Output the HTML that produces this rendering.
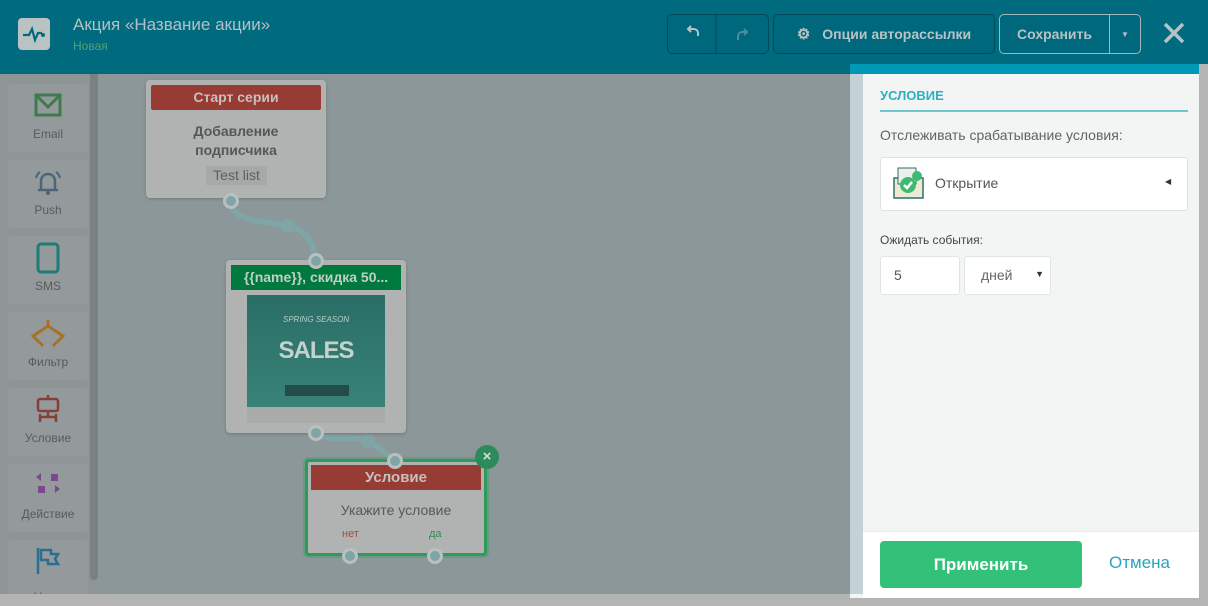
<!DOCTYPE html><html><head><meta charset="utf-8"><style>
*{box-sizing:border-box;margin:0;padding:0}
body{width:1208px;height:606px;overflow:hidden;position:relative;background:#8b9798;font-family:"Liberation Sans",sans-serif}
.abs{position:absolute}
.hdr{left:0;top:0;width:1208px;height:74px;background:#006a7f}
.logo{left:18px;top:18px;width:32px;height:32px;background:#b9c3c4;border-radius:4px}
.side{left:0;top:74px;width:98px;height:520px;background:#8f9495}
.item{left:8px;width:80px;height:68px;background:#949a9b;border-radius:4px;text-align:center;font-size:12px;color:#565b5c}
.item span{position:absolute;left:0;right:0;bottom:11px}
.item svg{position:absolute;left:24px;top:6px}
.sb{left:90px;top:74px;width:8px;height:506px;background:#7c8081;border-radius:0 0 4px 4px}
.card{background:#b1b3b3;border-radius:4px;box-shadow:0 1px 3px rgba(0,0,0,.2)}
.dot{width:16px;height:16px;border-radius:50%;background:#7fa5a6;border:3px solid #b8c0c0}
.btn{border:1px solid #004a59;border-radius:5px;height:40px;color:#b6c3c6;font-weight:bold;font-size:14px;display:flex;align-items:center;justify-content:center}
</style></head><body>
<div class="abs hdr"></div>
<div class="abs logo"><svg width="32" height="32"><path d="M5 17h6l3-6 3 11 3-7h4" stroke="#006a7f" stroke-width="2.2" fill="none"/><circle cx="25" cy="17" r="2" fill="#006a7f"/></svg></div>
<div class="abs" style="left:73px;top:15px;font-size:17px;color:#b4c1c4">Акция «Название акции»</div>
<div class="abs" style="left:73px;top:39px;font-size:12px;color:#51a077">Новая</div>
<div class="abs btn" style="left:667px;top:14px;width:102px;background:#00687c"><svg width="102" height="40"><path d="M30 22v-3a4 4 0 0 0-4-4h-6M23 12l-3 3 3 3" stroke="#b6c3c6" stroke-width="2" fill="none"/><line x1="48" y1="0" x2="48" y2="40" stroke="#004a59"/><path d="M70 26v-4a4 4 0 0 1 4-4h5M76 15l3 3-3 3" stroke="#4d8e9b" stroke-width="2" fill="none"/></svg></div>
<div class="abs btn" style="left:773px;top:14px;width:222px;background:#00687c"><span style="font-size:15px;margin-right:12px">⚙</span>Опции авторассылки</div>
<div class="abs btn" style="left:999px;top:14px;width:142px;border-color:#9fb7bd;background:#00687c;justify-content:flex-start"><span style="width:110px;text-align:center;border-right:1px solid #9fb7bd;line-height:38px">Сохранить</span><span style="flex:1;text-align:center;font-size:8px">▼</span></div>
<svg class="abs" style="left:1162px;top:21px" width="24" height="24"><path d="M3 3l18 18M21 3L3 21" stroke="#b6c3c6" stroke-width="3.5"/></svg>

<div class="abs side"></div>
<div class="abs sb"></div>
<div class="abs item" style="top:84px"><svg width="32" height="32"><rect x="4" y="5" width="24" height="20" fill="none" stroke="#3e7a4c" stroke-width="3"/><path d="M5 6l11 11 11-11" fill="none" stroke="#3e7a4c" stroke-width="3"/></svg><span>Email</span></div>
<div class="abs item" style="top:160px"><svg width="32" height="32"><path d="M9 24V15a7 7 0 0 1 14 0v9h3H6z" fill="none" stroke="#4e6478" stroke-width="2.5"/><circle cx="16" cy="27" r="2" fill="#4e6478"/><path d="M4 12a10 10 0 0 1 4-6M28 12a10 10 0 0 0-4-6" stroke="#4e6478" stroke-width="2" fill="none"/></svg><span>Push</span></div>
<div class="abs item" style="top:236px"><svg width="32" height="32"><rect x="6" y="2" width="20" height="28" rx="3" fill="none" stroke="#1c7c79" stroke-width="3"/></svg><span>SMS</span></div>
<div class="abs item" style="top:312px"><svg width="40" height="32" style="left:20px"><path d="M20 2v8M20 8L5 18l10 10M20 8l15 10-10 10" fill="none" stroke="#a67228" stroke-width="3"/></svg><span>Фильтр</span></div>
<div class="abs item" style="top:388px"><svg width="32" height="32"><rect x="6" y="5" width="20" height="12" rx="2" fill="none" stroke="#853f3b" stroke-width="2.5"/><path d="M16 1v4M16 17v6M8 23h16M8 20v8M24 20v8" stroke="#853f3b" stroke-width="2.5"/></svg><span>Условие</span></div>
<div class="abs item" style="top:464px"><svg width="32" height="32"><rect x="19" y="4" width="7" height="7" fill="#7b4a8e"/><rect x="6" y="16" width="7" height="7" fill="#7b4a8e"/><path d="M4 7l5-4v8zM28 19l-5-4v8z" fill="#7b4a8e"/></svg><span>Действие</span></div>
<div class="abs item" style="top:540px;height:60px"><svg width="32" height="32"><path d="M6 2v26" stroke="#2a6f8f" stroke-width="2.5"/><path d="M9 4h10v4h7l-3 5 3 5H16v-4H9z" fill="none" stroke="#2a6f8f" stroke-width="2.5"/></svg><span style="bottom:-4px">Цель</span></div>

<svg class="abs" style="left:0;top:0" width="850" height="606"><path d="M231 201c0 20 30 20 55 24s30 30 30 36M316 433c10 10 40 0 55 10s24 16 24 18" stroke="#7fa5a6" stroke-width="6" fill="none"/><circle cx="288" cy="226" r="7" fill="#7fa5a6"/><circle cx="368" cy="441" r="7" fill="#7fa5a6"/></svg>

<div class="abs card" style="left:146px;top:80px;width:180px;height:118px">
<div class="abs" style="left:5px;top:5px;width:170px;height:25px;background:#963c35;border-radius:2px;color:#c8bfbe;font-weight:bold;font-size:14px;text-align:center;line-height:25px">Старт серии</div>
<div class="abs" style="left:0;top:42px;width:180px;text-align:center;font-weight:bold;font-size:14px;line-height:19px;color:#545859">Добавление<br>подписчика</div>
<div class="abs" style="left:60px;top:86px;width:61px;height:19px;background:#a6a9a9;color:#5c6060;font-size:14px;text-align:center;line-height:19px">Test list</div></div>
<div class="abs dot" style="left:223px;top:193px"></div>

<div class="abs card" style="left:226px;top:260px;width:180px;height:173px">
<div class="abs" style="left:5px;top:5px;width:170px;height:25px;background:#00793f;color:#c0cfc5;font-weight:bold;font-size:14px;text-align:center;line-height:25px">{{name}}, скидка 50...</div>
<div class="abs" style="left:21px;top:35px;width:138px;height:128px;background:linear-gradient(#2a6e66,#3a857a)"><div class="abs" style="left:0;top:112px;width:138px;height:16px;background:#a9aba9"></div>
<div class="abs" style="left:0;top:20px;width:138px;text-align:center;color:#b9cfc8;font-size:8px;font-style:italic">SPRING SEASON</div>
<div class="abs" style="left:0;top:42px;width:138px;text-align:center;color:#c5d1cc;font-size:24px;font-weight:bold;letter-spacing:-1px;font-family:'Liberation Sans Narrow','Liberation Sans',sans-serif">SALES</div>
<div class="abs" style="left:38px;top:90px;width:64px;height:11px;background:#244c49"></div></div></div>
<div class="abs dot" style="left:308px;top:253px"></div>
<div class="abs dot" style="left:308px;top:425px"></div>

<div class="abs" style="left:305px;top:459px;width:182px;height:97px;border:3px solid #2e9a5c;border-radius:4px;background:#b1b3b3;box-shadow:0 0 0 2px rgba(60,160,100,.4)">
<div class="abs" style="left:3px;top:3px;width:170px;height:25px;background:#963c35;color:#c8bfbe;font-weight:bold;font-size:15px;text-align:center;line-height:25px">Условие</div>
<div class="abs" style="left:0;top:40px;width:176px;text-align:center;font-size:14px;color:#545859">Укажите условие</div>
<div class="abs" style="left:34px;top:66px;font-size:11px;color:#a04a48">нет</div>
<div class="abs" style="left:121px;top:66px;font-size:11px;color:#2e8a50">да</div></div>
<div class="abs dot" style="left:387px;top:453px"></div>
<div class="abs dot" style="left:342px;top:548px"></div>
<div class="abs dot" style="left:427px;top:548px"></div>
<div class="abs" style="left:475px;top:445px;width:24px;height:24px;border-radius:50%;background:#2e8a5a;color:#cfe0d6;text-align:center;line-height:23px;font-weight:bold;font-size:15px">×</div>

<div class="abs" style="left:0;top:594px;width:1208px;height:12px;background:#b4b4b4"></div>
<div class="abs" style="left:1199px;top:64px;width:9px;height:542px;background:#b4b4b4"></div>

<div class="abs" style="left:850px;top:64px;width:349px;height:534px;background:#f3f5f4"></div>
<div class="abs" style="left:850px;top:64px;width:349px;height:10px;background:#0099b5"></div>
<div class="abs" style="left:850px;top:74px;width:13px;height:520px;background:#c4d1d6"></div>
<div class="abs" style="left:880px;top:88px;font-size:13px;font-weight:bold;color:#2bb0c3">УСЛОВИЕ</div>
<div class="abs" style="left:880px;top:110px;width:308px;height:2px;background:#6cc7cf"></div>
<div class="abs" style="left:880px;top:127px;font-size:14px;color:#606466">Отслеживать срабатывание условия:</div>
<div class="abs" style="left:880px;top:157px;width:308px;height:54px;background:#fff;border:1px solid #dce3e2;border-radius:3px">
<svg class="abs" style="left:10px;top:8px" width="36" height="36"><rect x="3" y="12" width="29" height="20" fill="#eee9d6" stroke="#2a7268" stroke-width="1.5"/><rect x="7" y="2" width="18" height="16" fill="#eee" stroke="#2a7268"/><circle cx="17" cy="19" r="8" fill="#3dbb72"/><circle cx="26" cy="10" r="5" fill="#3dbb72"/><path d="M13 19l3 3 5-6" stroke="#fff" stroke-width="2.5" fill="none"/></svg>
<div class="abs" style="left:54px;top:17px;font-size:14px;color:#555">Открытие</div>
<div class="abs" style="left:284px;top:19px;font-size:8px;color:#333">◀</div></div>
<div class="abs" style="left:880px;top:233px;font-size:12px;color:#444">Ожидать события:</div>
<div class="abs" style="left:880px;top:256px;width:80px;height:39px;background:#fff;border:1px solid #dfe6e5;border-radius:3px;font-size:14px;color:#555;padding:10px 0 0 13px">5</div>
<div class="abs" style="left:964px;top:256px;width:87px;height:39px;background:#fff;border:1px solid #dfe6e5;border-radius:3px;font-size:14px;color:#666;padding:10px 0 0 16px">дней<span style="position:absolute;right:6px;top:12px;font-size:9px;color:#333">▼</span></div>
<div class="abs" style="left:863px;top:531px;width:336px;height:67px;background:#fff;border-top:1px solid #eceeee"></div>
<div class="abs" style="left:880px;top:541px;width:202px;height:47px;background:#33c17a;border-radius:4px;color:#fff;font-weight:bold;font-size:17px;text-align:center;line-height:47px">Применить</div>
<div class="abs" style="left:1109px;top:553px;font-size:17px;color:#2ba3bd">Отмена</div>
</body></html>
